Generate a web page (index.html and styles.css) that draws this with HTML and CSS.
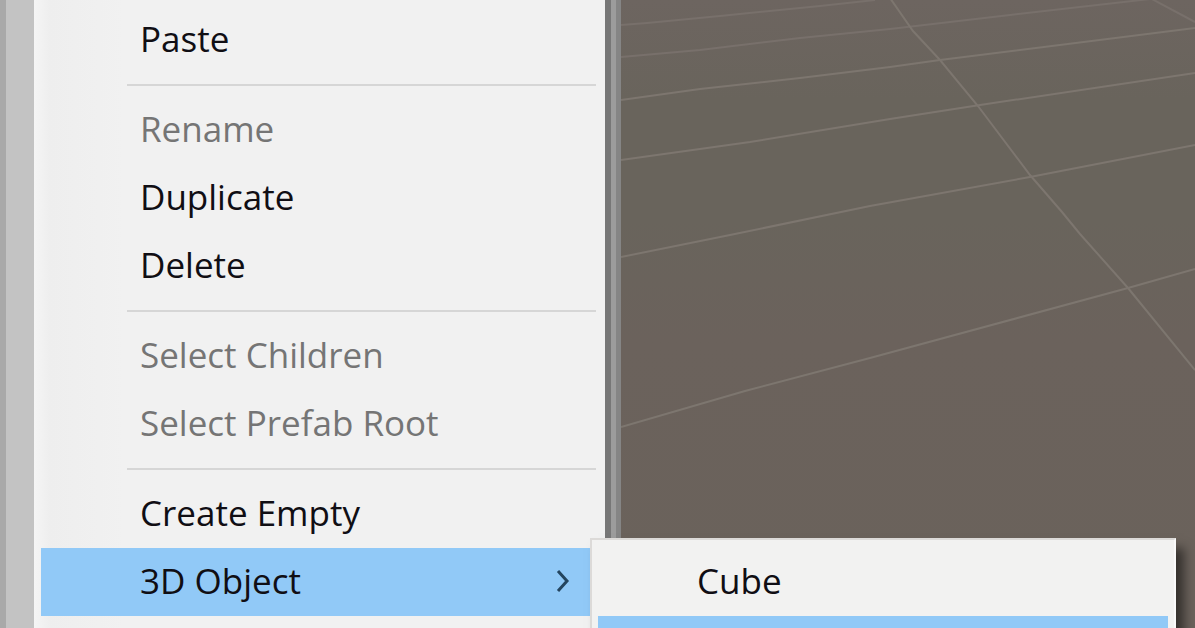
FILE: index.html
```
<!DOCTYPE html>
<html lang="en">
<head>
  <meta charset="UTF-8">
  <title>Hierarchy Menu</title>
  <link rel="stylesheet" href="styles.css">
</head>
<body>
  <div class="editor">
    <div class="panel-edge"></div>

    <ul class="menu">
      <li><button>Paste</button></li>
      <li class="separator"></li>
      <li><button disabled>Rename</button></li>
      <li><button>Duplicate</button></li>
      <li><button>Delete</button></li>
      <li class="separator"></li>
      <li><button disabled>Select Children</button></li>
      <li><button disabled>Select Prefab Root</button></li>
      <li class="separator"></li>
      <li><button>Create Empty</button></li>
      <li class="has-submenu">
        <button class="active">
          3D Object
          <svg class="arrow" viewBox="0 0 14 24" aria-hidden="true"><path d="M2 3 L11 13 L2 23"/></svg>
        </button>
        <ul class="submenu">
          <li><button>Cube</button></li>
          <li><button class="active"></button></li>
        </ul>
      </li>
    </ul>

    <div class="divider"></div>

    <div class="scene">
      <svg viewBox="621 0 574 628" preserveAspectRatio="xMinYMin slice" aria-hidden="true">
        <g class="grid-far">
          <path d="M621 25 L647 23 L720 16 L820 6 L875 0"/>
          <path d="M621 57 L700 50 L800 38 L890 29 L1010 15 L1150 -1"/>
          <path d="M1150 -2 L1195 22"/>
        </g>
        <g class="grid-near">
          <path d="M621 100 L700 89 L800 78 L890 67 L940 60 L1195 28"/>
          <path d="M621 160 L750 142 L890 119 L980 105 L1195 73"/>
          <path d="M621 257 L730 235 L870 206 L1030 177 L1195 145"/>
          <path d="M621 427 L745 391 L870 358 L1128 288 L1195 269"/>
          <path d="M890 -2 L913 31 L940 60 L978 106 L1030 175 L1062 212 L1080 234 L1128 288 L1195 370"/>
        </g>
      </svg>
    </div>
  </div>
</body>
</html>
```
FILE: styles.css
```
:root {
  --menu-bg: #f1f1f1;
  --highlight: #91c9f7;
  --text: #100e14;
  --text-disabled: #757575;
}

* {
  box-sizing: border-box;
}

body {
  margin: 0;
  font-family: "Open Sans", "Noto Sans", sans-serif;
  background: #6a635c;
}

.editor {
  display: flex;
  height: 100vh;
  overflow: hidden;
}

.panel-edge {
  flex: 0 0 34px;
  background: #c3c3c3;
  border-left: 6px solid #a9a9a9;
}

ul {
  list-style: none;
  margin: 0;
}

.menu {
  flex: 0 0 auto;
  min-width: 571px;
  padding: 6px 7px;
  background: linear-gradient(to right, #f5f5f5, #eeeeee 16px, var(--menu-bg) 90px);
}

.menu button {
  display: flex;
  align-items: center;
  justify-content: space-between;
  width: 100%;
  height: 68px;
  padding: 0 28px 4px 99px;
  border: none;
  background: none;
  color: var(--text);
  font-family: inherit;
  font-size: 35px;
  text-align: left;
}

.menu button:disabled {
  color: var(--text-disabled);
}

.menu button.active {
  background: var(--highlight);
}

.separator {
  height: 22px;
  padding: 10px 2px 0 86px;
}

.separator::before {
  content: "";
  display: block;
  height: 2px;
  background: #d6d6d6;
}

.arrow {
  width: 14px;
  height: 24px;
  fill: none;
  stroke: #24455f;
  stroke-width: 3;
}

.has-submenu {
  position: relative;
}

.submenu {
  position: absolute;
  top: -10px;
  left: calc(100% - 8px);
  width: 586px;
  padding: 8px 6px;
  border: 2px solid #dcdad8;
  border-right-color: #fafafa;
  background: #f2f2f1;
  box-shadow: 8px 10px 10px rgba(0, 0, 0, 0.5);
  z-index: 1;
}

.divider {
  flex: 0 0 16px;
  background: linear-gradient(to right, #777777 6px, #9c9c9c 6px, #9c9c9c 11px, #858585 11px);
}

.scene {
  flex: 1;
  background: linear-gradient(#6d6560, #69645c 100px, #69645c 220px, #6b625c 340px, #6a625b);
}

.scene svg {
  display: block;
  width: 100%;
  height: 100%;
  fill: none;
  stroke-width: 2;
}

.grid-far {
  stroke: #78706b;
}

.grid-near {
  stroke: #7d766f;
}
```
